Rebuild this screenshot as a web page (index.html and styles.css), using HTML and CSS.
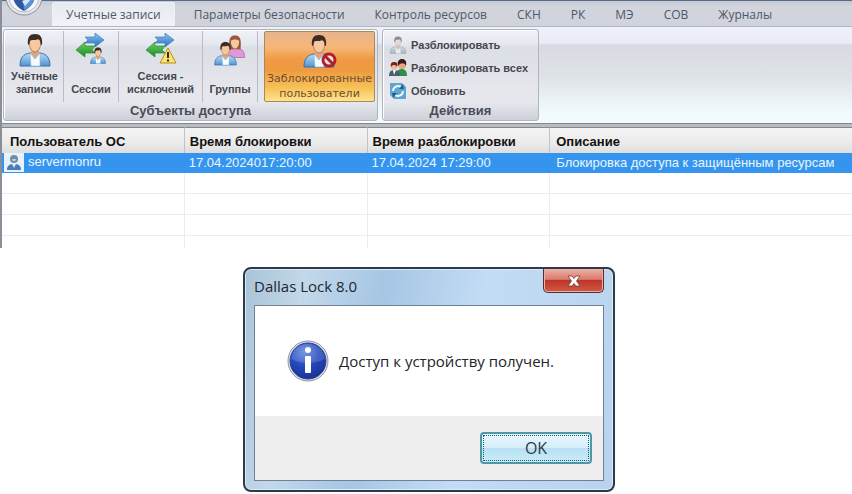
FILE: index.html
```html
<!DOCTYPE html>
<html lang="ru">
<head>
    <meta charset="UTF-8">
    <meta name="viewport" content="width=device-width, initial-scale=1.0">
    <title>Dallas Lock 8.0</title>
    <link rel="stylesheet" href="styles.css">
</head>
<body>
    <!-- Общие иконки -->
    <svg class="defs" width="0" height="0" aria-hidden="true">
        <defs>
            <linearGradient id="coat" x1="0" y1="0" x2="0" y2="1">
                <stop offset="0" stop-color="#b5dcf7"/>
                <stop offset="1" stop-color="#4f93d2"/>
            </linearGradient>
            <linearGradient id="blueArrow" x1="0" y1="0" x2="0" y2="1">
                <stop offset="0" stop-color="#8cc4f0"/>
                <stop offset="1" stop-color="#2470bd"/>
            </linearGradient>
            <linearGradient id="greenArrow" x1="0" y1="0" x2="0" y2="1">
                <stop offset="0" stop-color="#6fd35a"/>
                <stop offset="1" stop-color="#1b8a2c"/>
            </linearGradient>
            <radialGradient id="info" cx="0.4" cy="0.25" r="0.8">
                <stop offset="0" stop-color="#5d86e0"/>
                <stop offset="0.5" stop-color="#2448bd"/>
                <stop offset="1" stop-color="#1a2f93"/>
            </radialGradient>
        </defs>
        <symbol id="user" viewBox="0 0 32 34">
            <path d="M1 33 C1 25 4 21 11 20 L21 20 C28 21 31 25 31 33 Z" fill="url(#coat)" stroke="#3a6ea8"/>
            <path d="M11 20 L16 26 L21 20 L21 33 L12 33 Z" fill="#f4fafe" stroke="#8fb6d8" stroke-width="0.6"/>
            <path d="M12 16 L20 16 L20 21 L16 25 L12 21 Z" fill="#e0a57c"/>
            <path d="M10 8 C10 15 13 19 16 19 C19 19 22 15 22 8 C20 5 12 5 10 8 Z" fill="#f6c8a2" stroke="#9a6240" stroke-width="0.7"/>
            <path d="M9 12 C8 4 11 1 16 1 C21 1 24 4 23 12 L21.500 11 C21.500 8 21 7 19 6 C16 8 12 6 11 8 L10.500 11 Z" fill="#3d2b26"/>
        </symbol>
        <symbol id="woman" viewBox="0 0 32 34">
            <path d="M3 33 C3 25 6 21 11 20 L21 20 C27 21 30 25 30 33 Z" fill="#dd9ad6" stroke="#a55e9f"/>
            <path d="M8 21 C6 4 10 1 16 1 C22 1 26 4 24 21 Z" fill="#9a5a3a"/>
            <path d="M10 9 C10 16 13 20 16 20 C19 20 22 16 22 9 C20 6 12 6 10 9 Z" fill="#f6c8a2"/>
        </symbol>
        <symbol id="arrows" viewBox="0 0 32 32">
            <path d="M10 4 L20 4 L20 0 L29 7 L20 14 L20 10 L10 10 L13 7 Z" fill="url(#blueArrow)" stroke="#3c7fbd" stroke-width="0.7"/>
            <path d="M20 13 L10 13 L10 9 L1 17 L10 24 L10 20 L20 20 L17 17 Z" fill="url(#greenArrow)" stroke="#2c8736" stroke-width="0.7"/>
        </symbol>
    </svg>

    <div class="app">
        <nav class="tabs">
            <span class="logo">
                <svg width="38" height="38" viewBox="0 0 38 38" aria-hidden="true">
                    <circle cx="19" cy="19" r="18" fill="#e4e6ea" stroke="#8c9098"/>
                    <circle cx="19" cy="19" r="15" fill="#f7f8fa" stroke="#b7bac2"/>
                    <path d="M8 8 L30 8 L30 19 C29 26 24 30 19 33 C13 30 9 26 8 19 Z" fill="#2c5aa0"/>
                    <path d="M18 20 L30 19 C29 26 24 30 19 32 Z" fill="#5d93d2"/>
                    <path d="M17 23 L27 20 L20 28 Z" fill="#d8e6f5"/>
                </svg>
            </span>
            <a class="tab active" href="#accounts">Учетные записи</a>
            <a class="tab" href="#security">Параметры безопасности</a>
            <a class="tab" href="#resources">Контроль ресурсов</a>
            <a class="tab" href="#skn">СКН</a>
            <a class="tab" href="#rk">РК</a>
            <a class="tab" href="#me">МЭ</a>
            <a class="tab" href="#sov">СОВ</a>
            <a class="tab" href="#logs">Журналы</a>
        </nav>

        <div class="ribbon">
            <section class="group">
                <div class="tools">
                    <button class="tool">
                        <svg width="32" height="34"><use href="#user"/></svg>
                        <span>Учётные<br>записи</span>
                    </button>
                    <button class="tool">
                        <svg width="32" height="34" viewBox="0 0 32 34">
                            <use href="#arrows" width="32" height="32"/>
                            <use href="#user" x="15" y="14" width="16" height="17"/>
                        </svg>
                        <span>Сессии</span>
                    </button>
                    <button class="tool wide">
                        <svg width="32" height="34" viewBox="0 0 32 34">
                            <use href="#arrows" width="32" height="32"/>
                            <path d="M23 15 L31 30 L15 30 Z" fill="#fbe36a" stroke="#b8901c" stroke-linejoin="round"/>
                            <path d="M23 19 L23 25 M23 26.500 L23 28.500" stroke="#2b2b2b" stroke-width="2"/>
                        </svg>
                        <span>Сессия -<br>исключений</span>
                    </button>
                    <button class="tool">
                        <svg width="32" height="34" viewBox="0 0 32 34">
                            <use href="#woman" x="10" y="1" width="22" height="25"/>
                            <use href="#user" x="0" y="8" width="23" height="25"/>
                        </svg>
                        <span>Группы</span>
                    </button>
                    <button class="tool pressed">
                        <svg width="34" height="34" viewBox="0 0 34 34">
                            <use href="#user" width="32" height="34"/>
                            <circle cx="26" cy="26" r="6" fill="#f3dede" stroke="#b0202c" stroke-width="3"/>
                            <path d="M22 22 L30 30" stroke="#b0202c" stroke-width="3"/>
                        </svg>
                        <span>Заблокированные<br>пользователи</span>
                    </button>
                </div>
                <h2>Субъекты доступа</h2>
            </section>

            <section class="group actions">
                <div class="action-list">
                    <button class="action">
                        <svg class="faded" width="18" height="18"><use href="#user"/></svg>
                        Разблокировать
                    </button>
                    <button class="action">
                        <svg width="18" height="18" viewBox="0 0 18 18">
                            <path d="M7 17 C7 12 9 10 13 10 C16 10 18 12 18 17 Z" fill="#2f8f4c"/>
                            <circle cx="13" cy="6" r="4" fill="#e3a67e"/>
                            <path d="M9 7 C8 2 10 0 13 0 C16 0 18 2 17 7 C16 4 12 3 9 7 Z" fill="#3a1c1a"/>
                            <path d="M0 17 C0 13 2 11 5 11 C9 11 11 13 11 17 Z" fill="#46606e"/>
                            <path d="M4 11 L5 16 L7 11 Z" fill="#ffffff"/>
                            <circle cx="5" cy="8" r="3" fill="#efbc98"/>
                            <path d="M2 8 C1 4 3 3 5 3 C8 3 9 4 8 8 C7 6 4 5 2 8 Z" fill="#7a2420"/>
                        </svg>
                        Разблокировать всех
                    </button>
                    <button class="action">
                        <svg width="18" height="18" viewBox="0 0 18 18">
                            <path d="M1 1 L13 1 L17 5 L17 17 L5 17 L1 13 Z" fill="#5fa5d0"/>
                            <path d="M4 9 A5 5 0 0 1 12 5 M14 9 A5 5 0 0 1 6 13" fill="none" stroke="#e9f6fd" stroke-width="2"/>
                            <path d="M10 7 L15 7 L14 2 Z M8 11 L3 11 L4 16 Z" fill="#1d5f92"/>
                        </svg>
                        Обновить
                    </button>
                </div>
                <h2>Действия</h2>
            </section>
        </div>

        <table class="users">
            <thead>
                <tr>
                    <th class="name">Пользователь ОС</th>
                    <th>Время блокировки</th>
                    <th>Время разблокировки</th>
                    <th class="last">Описание</th>
                </tr>
            </thead>
            <tbody>
                <tr class="selected">
                    <td class="name"><svg width="20" height="19" viewBox="0 0 20 19"><rect width="20" height="19" fill="#e9f2fb"/><path d="M3 17 C3 12 6 11 10 11 C14 11 17 12 17 17 Z" fill="#4a7cb8"/><path d="M8 11 L10 15 L12 11 Z" fill="#dbe9f5"/><circle cx="10" cy="6" r="4" fill="#6d8dad"/><path d="M8 6 C8 9 12 9 12 6 Z" fill="#c5cdd4"/></svg>servermonru</td>
                    <td>17.04.2024017:20:00</td>
                    <td>17.04.2024 17:29:00</td>
                    <td class="last">Блокировка доступа к защищённым ресурсам</td>
                </tr>
                <tr><td></td><td></td><td></td><td class="last"></td></tr>
                <tr><td></td><td></td><td></td><td class="last"></td></tr>
                <tr><td></td><td></td><td></td><td class="last"></td></tr>
                <tr class="cut"><td></td><td></td><td></td><td class="last"></td></tr>
            </tbody>
        </table>
    </div>

    <div class="desktop">
        <div class="dialog" role="dialog" aria-labelledby="dialogTitle">
            <div class="titlebar">
                <h1 id="dialogTitle">Dallas Lock 8.0</h1>
                <button class="close" aria-label="Закрыть">
                    <svg width="14" height="12" viewBox="0 0 14 12"><path d="M1 1 L5 1 L7 3.500 L9 1 L13 1 L9.500 6 L13 11 L9 11 L7 8.500 L5 11 L1 11 L4.500 6 Z" fill="#ffffff" stroke="#6b3b3b" stroke-width="0.8"/></svg>
                </button>
            </div>
            <div class="client">
                <div class="message">
                    <svg width="42" height="42" viewBox="0 0 42 42" aria-hidden="true">
                        <circle cx="21" cy="21" r="20" fill="#dfe4ee" stroke="#8b93a8"/>
                        <circle cx="21" cy="21" r="18" fill="url(#info)" stroke="#2c3f8c"/>
                        <path d="M4 19 C6 -1 36 -1 38 19 C28 24 14 24 4 19 Z" fill="#ffffff" opacity="0.15"/>
                        <circle cx="21" cy="10" r="3" fill="#ffffff"/>
                        <rect x="18" y="16" width="6" height="17" rx="1" fill="#ffffff"/>
                    </svg>
                    <p>Доступ к устройству получен.</p>
                </div>
                <div class="buttons">
                    <button class="ok">OK</button>
                </div>
            </div>
        </div>
    </div>
</body>
</html>
```
FILE: styles.css
```css
* {
    box-sizing: border-box;
}
body {
    margin: 0;
    background-color: #ffffff;
    font-family: "Liberation Sans", Arial, sans-serif;
    font-size: 12px;
}
button {
    margin: 0;
    padding: 0;
    border: none;
    background: none;
    font: inherit;
    color: inherit;
}
.defs {
    position: absolute;
}

/* Вкладки */
.app {
    border-left: 2px solid #8a8e98;
}
.tabs {
    display: flex;
    align-items: flex-end;
    height: 27px;
    border-top: 1px solid #5c6b85;
    background: linear-gradient(#c3c9d3, #d2d5dd 6px, #d0d3db);
    border-bottom: 1px solid #b4b8c2;
}
.logo {
    position: relative;
    width: 50px;
    height: 25px;
}
.logo svg {
    position: absolute;
    left: 3px;
    bottom: 10px;
}
.tab {
    padding: 0 15px;
    font-family: "Open Sans", "Noto Sans", sans-serif;
    font-size: 12px;
    line-height: 23px;
    color: #4f5866;
    text-decoration: none;
    white-space: nowrap;
}
.tab.active {
    padding: 0 13px;
    margin-right: 4px;
    background: linear-gradient(#e6e9ef, #f1f3f8);
    border: 1px solid #eef0f5;
    border-bottom: none;
    border-radius: 2px 2px 0 0;
}

/* Лента */
.ribbon {
    display: flex;
    gap: 4px;
    padding: 2px 2px 2px 1px;
    border-bottom: 1px solid #85888e;
    background: linear-gradient(#eff1fa, #e9ebf5 16px, #d8dae4 18px, #dfe3e6 50px, #f0fafb 84px, #f3fbfd);
}
.group {
    display: flex;
    flex-direction: column;
    height: 92px;
    padding: 1px 2px 0;
    border: 1px solid #b0b4be;
    border-radius: 3px;
    box-shadow: inset 1px 1px 0 #ffffff, 0 1px 0 #ffffff;
    background: linear-gradient(#f0f2f8, #e6e8ef 14px, #dcdee6 18px, #e5e7ed 60px, #e6e8ee 72px, #cdd0d9);
}
.group h2 {
    margin: 0;
    font-size: 13px;
    line-height: 18px;
    text-align: center;
    color: #4a4d55;
}
.tools {
    display: flex;
    height: 71px;
}
.tool {
    display: flex;
    flex-direction: column;
    align-items: center;
    justify-content: space-between;
    width: 55px;
    padding: 2px 0 6px;
    font-size: 11px;
    font-weight: bold;
    line-height: 13px;
    color: #45474d;
    border-right: 1px solid #b9bcc6;
}
.tool:first-child {
    width: 58px;
}
.tool.wide {
    width: 84px;
}
.tool.pressed {
    width: 111px;
    margin-left: 6px;
    padding-bottom: 0;
    border: 1px solid #a8895a;
    border-radius: 2px;
    background: linear-gradient(#e9b48c, #f6b676 16px, #f09a43 27px, #ee9a40 38px, #f8c158 56px, #fce48e);
    font-family: "DejaVu Sans", Verdana, sans-serif;
    font-size: 11px;
    font-weight: normal;
    line-height: 15px;
    color: #6e4f30;
}
.actions {
    width: 157px;
}
.action-list {
    display: flex;
    flex-direction: column;
    height: 71px;
    padding: 2px 4px 0;
}
.action {
    display: flex;
    align-items: center;
    gap: 4px;
    height: 23px;
    font-size: 11px;
    font-weight: bold;
    color: #45474d;
    white-space: nowrap;
}
.faded {
    opacity: 0.5;
    filter: grayscale(0.6);
}

/* Таблица */
.users {
    width: 100%;
    table-layout: fixed;
    border-collapse: separate;
    border-spacing: 0;
    border-top: 3px solid #b9bbbf;
}
.users th {
    height: 26px;
    padding: 2px 5px 0;
    background: linear-gradient(#f4f4f4, #ebebeb 60%, #dedede);
    border-top: 1px solid #85888e;
    border-right: 1px solid #c2c2c2;
    font-size: 13px;
    text-align: left;
    color: #111111;
    white-space: nowrap;
}
.users th:not(.last) {
    width: 21.5%;
}
.users th.name {
    padding-left: 8px;
}
.users td {
    height: 21px;
    padding: 0 4px;
    border-right: 1px solid #ececec;
    border-bottom: 1px solid #ececec;
    white-space: nowrap;
}
.users .selected td {
    height: 20px;
    background-color: #3595ee;
    border-color: #3595ee;
    font-size: 13px;
    color: #e9f6ff;
}
.users td.last,
.users th.last {
    padding-left: 6px;
    border-right: none;
}
.users .cut td {
    height: 12px;
    border-bottom: none;
}
.users td.name {
    padding-left: 2px;
}
.name svg {
    margin-right: 4px;
    vertical-align: middle;
}

/* Окно сообщения */
.desktop {
    display: flex;
    justify-content: center;
    padding: 19px 0 2px 6px;
}
.dialog {
    width: 372px;
    padding: 0 9px 9px;
    border: 2px solid #2e3a48;
    border-radius: 8px;
    background: linear-gradient(100deg, #a9c3d6, #c3d8ea 15%, #a5c6e4 35%, #c3dcf5 60%, #b9d3ee);
    box-shadow: inset 0 0 0 1px #dcebf8;
}
.titlebar {
    display: flex;
    justify-content: space-between;
    align-items: flex-start;
    height: 36px;
}
.titlebar h1 {
    margin: 0;
    font-family: "Open Sans", "Noto Sans", sans-serif;
    font-size: 15px;
    font-weight: normal;
    line-height: 34px;
    color: #1c2733;
}
.close {
    display: flex;
    align-items: center;
    justify-content: center;
    width: 61px;
    height: 24px;
    border: 1px solid #5a2b30;
    border-top: none;
    border-radius: 0 0 5px 5px;
    background: linear-gradient(#eeb0a4, #db7a6c 45%, #bd3527 50%, #cf5a45);
    box-shadow: inset 0 0 0 1px #e7b1a8;
}
.client {
    border: 1px solid #6e8294;
    background-color: #ffffff;
}
.message {
    display: flex;
    align-items: center;
    gap: 10px;
    height: 110px;
    padding-left: 32px;
}
.message p {
    margin: 0;
    font-family: "Open Sans", "Noto Sans", sans-serif;
    font-size: 15px;
    color: #22252b;
    white-space: nowrap;
}
.buttons {
    display: flex;
    justify-content: flex-end;
    padding: 16px 11px;
    background-color: #eeeeee;
}
.ok {
    width: 112px;
    height: 32px;
    border: 2px solid #4d98a8;
    border-radius: 4px;
    outline: 1px dotted #34505c;
    outline-offset: -4px;
    background: linear-gradient(#e9f8fd, #d5eefa 48%, #b8e0f3 52%, #c9eef8);
    font-family: "Open Sans", "Noto Sans", sans-serif;
    font-size: 16px;
    color: #2d3a44;
}
```
